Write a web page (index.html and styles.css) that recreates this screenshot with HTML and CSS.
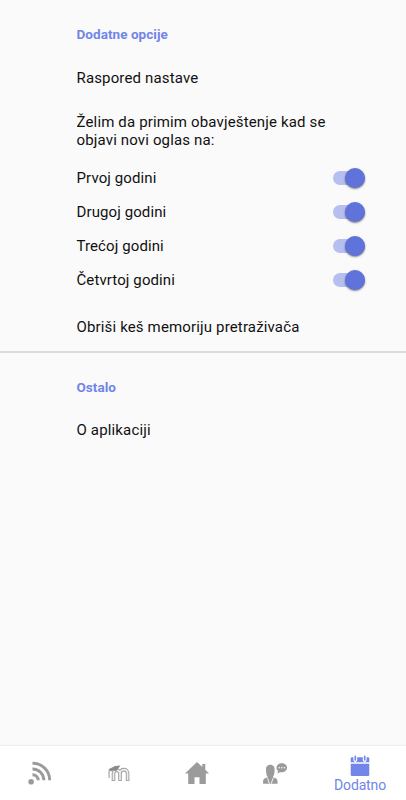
FILE: index.html
```html
<!DOCTYPE html>
<html lang="sr-Latn">
<head>
  <meta charset="UTF-8" />
  <meta name="viewport" content="width=device-width, initial-scale=1.0"/>
  <title>Dodatno</title>
  <link rel="stylesheet" href="styles.css">
</head>
<body>

  <main class="settings">
    <section class="group">
      <h2>Dodatne opcije</h2>
      <p class="item schedule">Raspored nastave</p>
      <p class="item notify">Želim da primim obavještenje kad se objavi novi oglas na:</p>

      <div class="switches">
        <div class="row"><span>Prvoj godini</span><span class="switch"></span></div>
        <div class="row"><span>Drugoj godini</span><span class="switch"></span></div>
        <div class="row"><span>Trećoj godini</span><span class="switch"></span></div>
        <div class="row"><span>Četvrtoj godini</span><span class="switch"></span></div>
      </div>

      <p class="item cache">Obriši keš memoriju pretraživača</p>
    </section>

    <section class="group other">
      <h2>Ostalo</h2>
      <p class="item about">O aplikaciji</p>
    </section>
  </main>

  <!-- Bottom navigation -->
  <nav class="bottom-nav">
    <a class="tab">
      <svg width="24" height="24" viewBox="0 0 24 24">
        <circle cx="3.1" cy="20.8" r="2.8" fill="currentColor"/>
        <path d="M4.5 2.2A17 17 0 0 1 21.7 19.2M4.5 8A11.3 11.3 0 0 1 15.9 19.2M4.5 13.7A5.6 5.6 0 0 1 10.2 19.2" fill="none" stroke="currentColor" stroke-width="2.9"/>
      </svg>
    </a>
    <a class="tab">
      <svg width="24" height="24" viewBox="0 0 24 24">
        <g fill="none">
          <path d="M6.5 20V12.5C6.5 8.4 13 8.4 13 12.5V20M13 12.5C13 7.3 20.6 7.3 20.6 12.5V20" stroke="currentColor" stroke-width="3.6"/>
          <path d="M6.5 19.2V12.5C6.5 8.4 13 8.4 13 12.5V19.2M13 12.5C13 7.3 20.6 7.3 20.6 12.5V19.2" stroke="#eee" stroke-width="1.7"/>
        </g>
        <path d="M1.5 8.3L8 5L13.4 4.6L11.1 7.8L8.8 10.4C7.3 9.2 5.5 9.4 4.1 10.4Z" fill="#8c8c8c"/>
        <path d="M2.3 8.5Q1.7 12 2.2 17" fill="none" stroke="currentColor" stroke-width="1.1"/>
      </svg>
    </a>
    <a class="tab">
      <svg width="24" height="24" viewBox="0 0 24 24">
        <path d="M12 1L17.3 6V3H20.3V8.8L24 12.5H20.8V23H14.5V16.2H9.5V23H3.2V12.5H0Z" fill="currentColor"/>
      </svg>
    </a>
    <a class="tab">
      <svg width="24" height="24" viewBox="0 0 24 24">
        <g fill="currentColor">
          <path d="M7.3 3.8C4.2 3.8 2.7 6.2 3 9C3.1 11.5 3.3 14.5 4.6 15.5L4.4 16.6C2.3 17.1.1 17.7.1 20.2V22.7H14.5V20.2C14.5 17.7 12.3 17.1 10.2 16.6L10 15.5C11.3 14.5 11.5 11.5 11.6 9C11.9 6.2 10.4 3.8 7.3 3.8Z"/>
          <path d="M18.8 2.3C15.8 2.3 13.5 4.2 13.5 6.8C13.5 8.2 14.2 9.3 15.2 10.1L14.3 12.5L17.2 11.2C21 11.9 24 9.8 24 6.8C24 4.2 21.8 2.3 18.8 2.3Z"/>
        </g>
        <path d="M4.5 17.2L6.4 22.7M10.1 17.2L8.2 22.7" stroke="#fff" stroke-width=".9"/>
        <g fill="#fff">
          <circle cx="16.2" cy="6.8" r=".75"/>
          <circle cx="18.8" cy="6.8" r=".75"/>
          <circle cx="21.4" cy="6.8" r=".75"/>
        </g>
      </svg>
    </a>
    <a class="tab active">
      <svg width="20" height="22" viewBox="0 0 20 22">
        <path d="M.7 3.5Q.7 2.2 2 2.2H18Q19.3 2.2 19.3 3.5V7.3H.7ZM.7 8.8H19.3V19.7Q19.3 21 18 21H2Q.7 21 .7 19.7Z" fill="currentColor"/>
        <path d="M5.3 1.2V5M14.7 1.2V5" stroke="#fff" stroke-width="3.8" stroke-linecap="round"/>
        <path d="M5.3 1.2V5M14.7 1.2V5" stroke="currentColor" stroke-width="1.6" stroke-linecap="round"/>
      </svg>
      <span>Dodatno</span>
    </a>
  </nav>

</body>
</html>
```

FILE: styles.css
```css
* {
  box-sizing: border-box;
}

body {
  margin: 0;
  height: 100vh;
  display: flex;
  flex-direction: column;
  overflow: hidden;
  background: #fafafa;
  color: #111;
  font-family: Roboto, sans-serif;
  font-size: 15px;
  line-height: 18px;
}

.settings {
  flex: 1;
}

.group {
  padding: 26px 40px 0 76.5px;
}

h2 {
  margin: 0;
  color: #7285e8;
  font-size: 13.5px;
  font-weight: 700;
  line-height: 17px;
  letter-spacing: 0.05px;
}

.item {
  margin: 0;
  letter-spacing: 0.15px;
}

.schedule {
  margin-top: 26px;
}

.notify {
  margin-top: 26px;
}

.switches {
  margin-top: 12px;
}

.row {
  display: flex;
  align-items: center;
  justify-content: space-between;
  height: 34px;
  letter-spacing: 0.1px;
}

/* Switch in the "on" state */
.switch {
  display: flex;
  align-items: center;
  justify-content: flex-end;
  width: 32px;
  height: 14px;
  margin-right: 1px;
  border-radius: 7px;
  background: #b6bff0;
}

.switch::after {
  content: "";
  width: 20px;
  height: 20px;
  border-radius: 50%;
  background: #5f73da;
  box-shadow: 0 1px 2px rgba(0, 0, 0, 0.5);
}

.cache {
  margin-top: 21px;
}

.other {
  margin-top: 15px;
  border-top: 2px solid #dcdcdc;
}

.about {
  margin-top: 25px;
}

/* Bottom navigation */
.bottom-nav {
  display: grid;
  grid-template-columns: 79px 79px 78px 78px 1fr;
  height: 54px;
  background: #fff;
  box-shadow: 0 0 2px rgba(0, 0, 0, 0.15);
  color: #9b9b9b;
}

.tab {
  display: flex;
  flex-direction: column;
  align-items: center;
  padding-top: 15px;
}

.tab svg {
  display: block;
}

.tab.active {
  padding-top: 9px;
  color: #7285e8;
  font-size: 14px;
  line-height: 17px;
  letter-spacing: -0.15px;
}
```
